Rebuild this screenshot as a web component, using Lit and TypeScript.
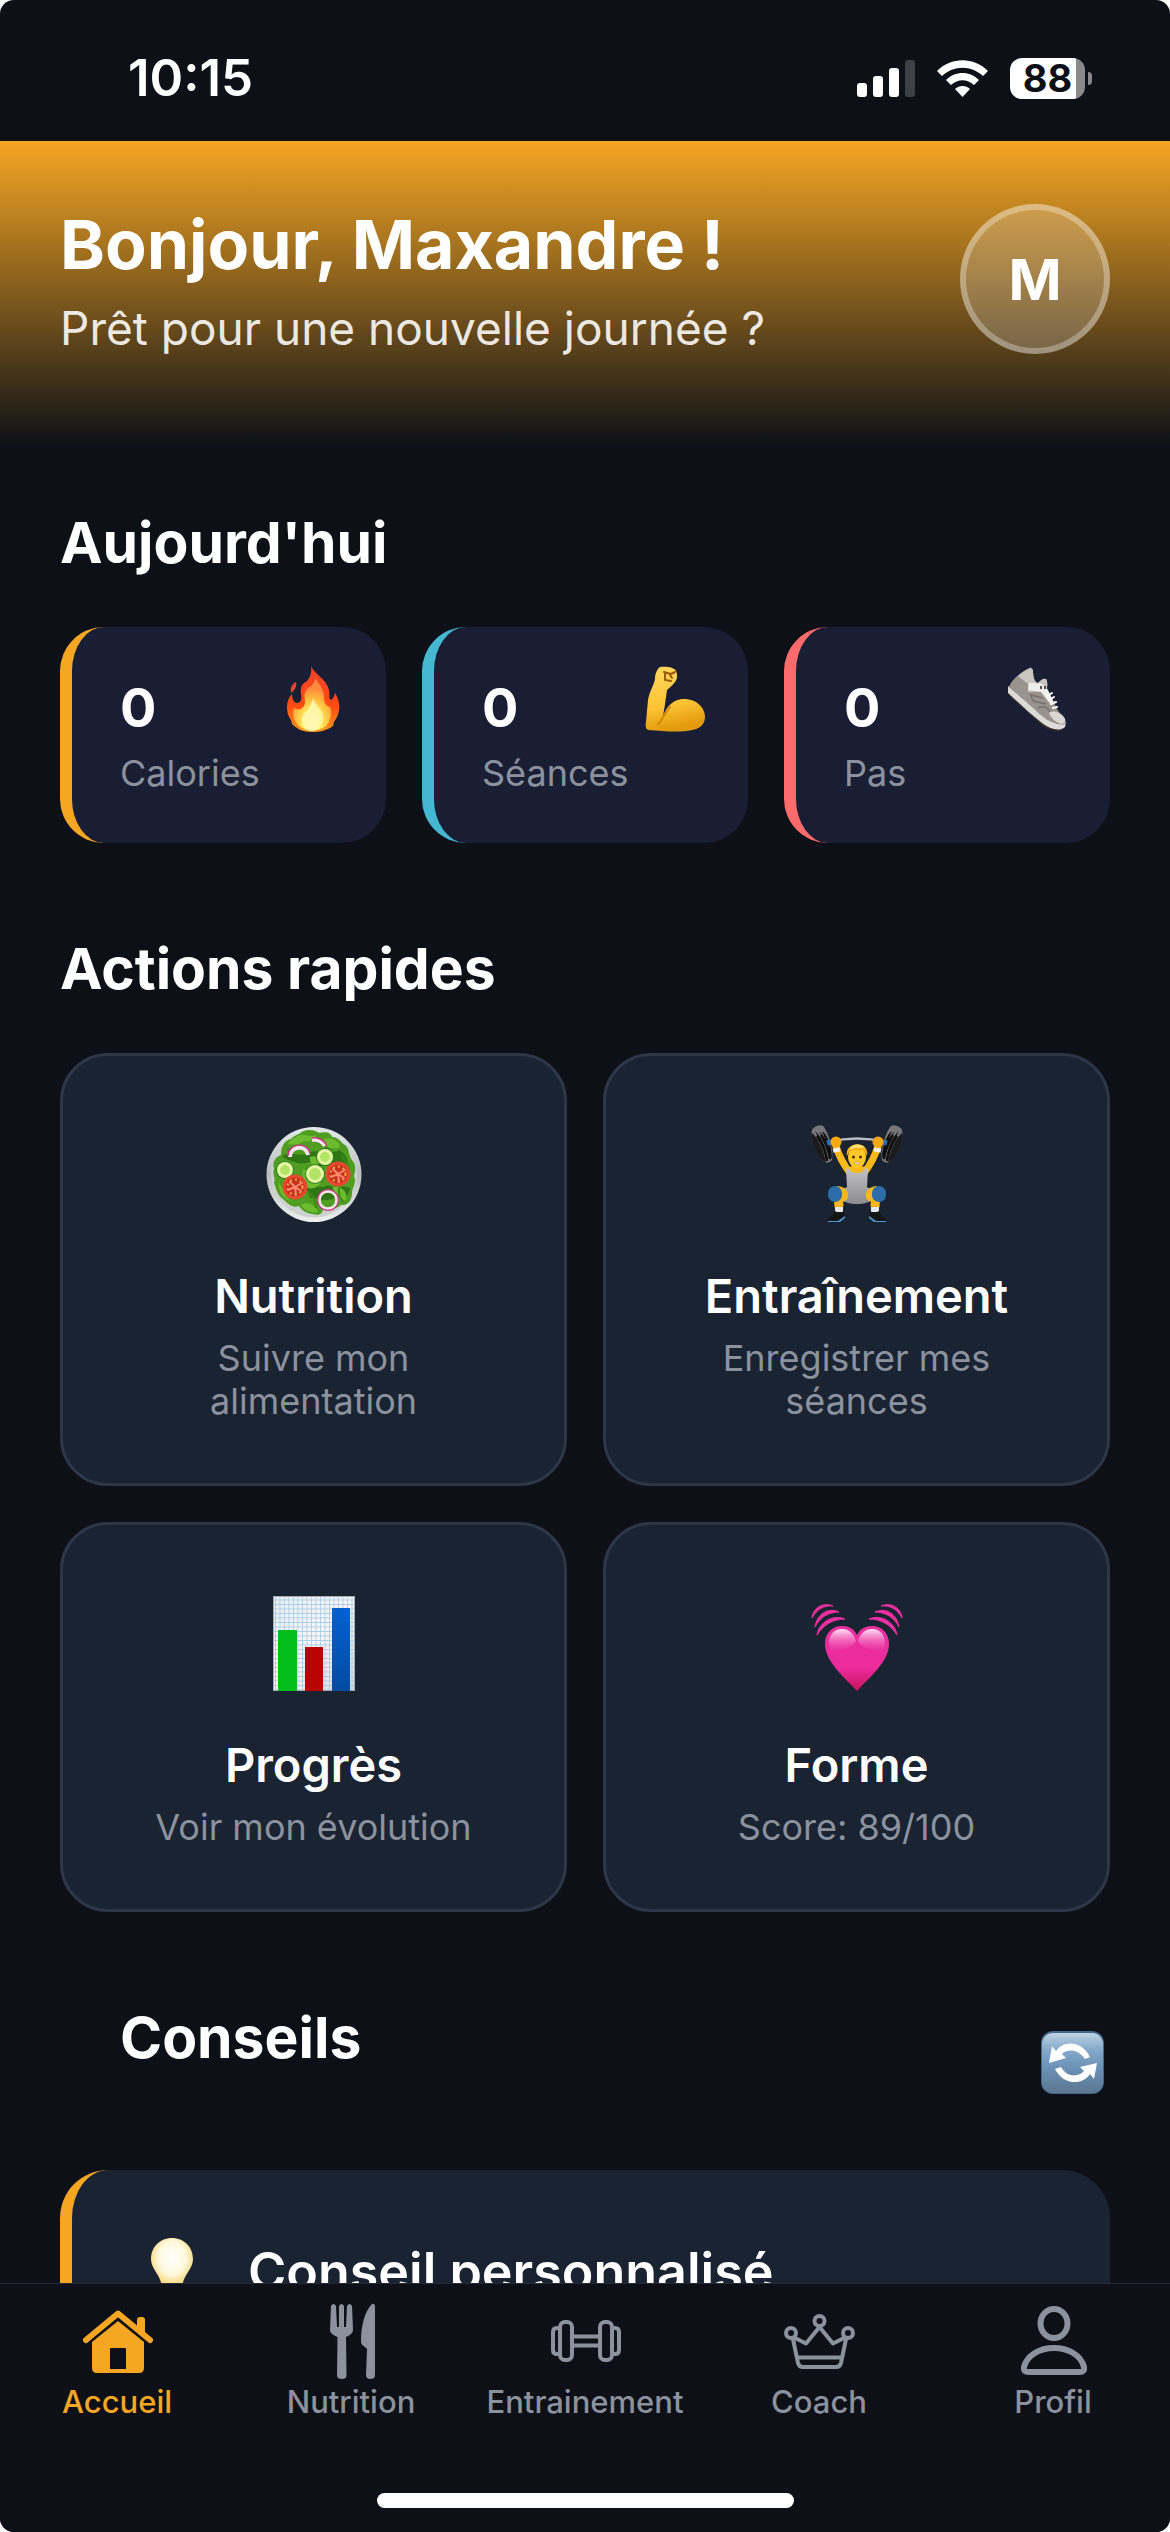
import { LitElement, html, svg, css, type TemplateResult } from "lit";
import { customElement, property, state } from "lit/decorators.js";
import { classMap } from "lit/directives/class-map.js";

type Drawing = TemplateResult<1> | TemplateResult<2>;

const flame = html`
  <svg width="66" height="66" viewBox="0 0 66 66" aria-hidden="true">
    <defs>
      <linearGradient id="flame-outer" x1="0" y1="0" x2="0" y2="1">
        <stop offset="0" stop-color="#f0432b" />
        <stop offset="0.6" stop-color="#ff4a12" />
        <stop offset="1" stop-color="#ff9a1c" />
      </linearGradient>
      <radialGradient id="flame-core" cx="0.5" cy="0.85" r="0.65">
        <stop offset="0" stop-color="#fffbe0" />
        <stop offset="0.35" stop-color="#ffee62" />
        <stop offset="0.75" stop-color="#ffb53c" />
        <stop offset="1" stop-color="#ff8a3c" />
      </radialGradient>
    </defs>
    <path fill="url(#flame-outer)" d="M31 0C34 8 47 13 49 24C50 29 48 32 51 34C54 32 54 30 55 27C59 33 60 40 59 45C58 50 56 53 54 56L53 60C46 65 39 66 32 66C23 66 17 63 12 58L11 54C8 50 7 46 7 41C7 36 9 31 12 28C12 33 14 37 17 37C21 37 22 33 21 28C20 22 22 17 26 16C30 12 32 7 31 0Z" />
    <path fill="#f0432b" d="M16 16C17 20 15 24 11 27C10 22 12 18 16 16Z" />
    <path fill="url(#flame-core)" d="M35 12C39 18 44 23 44 31C44 37 46 40 50 41C53 47 50 56 46 60C38 66 26 66 19 60C14 55 12 49 14 42C18 45 24 43 25 37C25 31 23 28 27 23C32 20 35 17 35 12Z" />
    <path fill="#fff7b0" opacity="0.85" d="M33 32C36 41 44 44 43 53C41 62 36 65 32 65C25 65 21 59 22 52C23 47 31 43 33 32Z" />
  </svg>
`;

const biceps = html`
  <svg width="66" height="66" viewBox="0 0 66 66" aria-hidden="true">
    <defs>
      <linearGradient id="arm-skin" x1="0" y1="0" x2="0.2" y2="1">
        <stop offset="0" stop-color="#ffd860" />
        <stop offset="0.65" stop-color="#fcc433" />
        <stop offset="1" stop-color="#e39a0c" />
      </linearGradient>
    </defs>
    <path fill="url(#arm-skin)" d="M18 1C23 0 33 1 34 5C36 9 35 14 33 16C30 20 27 22 25 24L23 38L21 51C24 40 32 33 42 33C55 33 63 42 63 51C63 59 57 63 50 64C37 67 22 65 6 64C4 63 3 60 4 56L6 34C8 24 12 19 13 13C13 8 15 3 18 1Z" />
    <path fill="none" stroke="#d18b07" stroke-width="2" stroke-linecap="round" d="M21 51C19 55 18 57 16 58M22 50C24 46 25 44 28 41" />
    <path fill="none" stroke="#9a5c06" stroke-width="2" stroke-linecap="round" stroke-linejoin="round" d="M22 6L29 8L33 6M23 7L23 14L29 15M28 9L30 12" />
  </svg>
`;

const sneaker = html`
  <svg width="66" height="66" viewBox="0 0 66 66" aria-hidden="true">
    <path fill="#2c2a2a" d="M4 24L5 30L38 60C44 64 52 67 57 65L60 62L40 52Z" />
    <path fill="#dddbd8" d="M4 20L4 27C14 36 26 48 38 57C46 63 55 66 61 61L62 56L40 50Z" />
    <path fill="#9a928c" d="M26 2C17 6 8 13 5 21C16 30 29 42 38 50C45 56 55 60 61 58C63 54 60 51 56 47C52 43 51 38 48 32C46 28 43 25 43 21L43 14C40 11 37 14 34 17C30 16 29 10 29 4C28 2 27 1 26 2Z" />
    <path fill="#c9c5c1" d="M26 2C21 4 17 7 14 10L24 18L24 26L42 25C44 20 44 16 42 13C39 12 36 15 34 17C30 16 29 10 29 4Z" />
    <path fill="#efedea" d="M25 17C30 17 34 17 38 18L44 24L50 37L47 39L37 26L24 24Z" />
    <path fill="#dad7d3" d="M45 47C49 44 55 46 59 50C62 53 62 57 58 58C53 57 47 53 45 47Z" />
    <path fill="none" stroke="#77706b" stroke-width="1.5" d="M27 29L39 32M29 35L42 38M34 42C40 39 44 42 46 46M26 28L30 36" />
    <path fill="none" stroke="#fff" stroke-width="2" stroke-linecap="round" d="M43 30L48 27M45 34L50 31M47 38L52 36M49 42L53 41" />
    <path fill="#55504c" d="M36 20h2v3h-2zM40 20h2v3h-2z" />
  </svg>
`;

const cucumber = (x: number, y: number, r: number) => svg`
  <circle cx=${x} cy=${y} r=${r} fill="#2f7d1f" />
  <circle cx=${x} cy=${y} r=${r - 1} fill="#e6f6a4" />
  <circle cx=${x} cy=${y} r=${r - 4} fill="#b2e466" />
`;

const tomato = (x: number, y: number) => svg`
  <circle cx=${x} cy=${y} r="12.5" fill="#e8492f" />
  <circle cx=${x} cy=${y} r="9.5" fill="#c5321f" />
  <circle cx=${x} cy=${y} r="7.5" fill="none" stroke="#f4a93f" stroke-width="2" stroke-dasharray="2 3" />
  <path d="M${x} ${y}l-5 -5M${x} ${y}l7 -4M${x} ${y}l1 8M${x} ${y}l-7 3M${x} ${y}l6 4" stroke="#ff8b70" stroke-width="2" stroke-linecap="round" />
`;

const salad = html`
  <svg width="96" height="96" viewBox="0 0 96 96" aria-hidden="true">
    <defs>
      <linearGradient id="plate" x1="0" y1="0" x2="0" y2="1">
        <stop offset="0" stop-color="#e4e8e8" />
        <stop offset="0.5" stop-color="#b9bfbe" />
        <stop offset="1" stop-color="#eef0f0" />
      </linearGradient>
    </defs>
    <circle cx="48" cy="48.5" r="47.5" fill="url(#plate)" />
    <circle cx="48" cy="48.5" r="43" fill="#cdd2d0" />
    <path fill="#4f9e22" d="M33 8C38 3 48 3 53 7C58 6 64 5 66 11C73 11 75 17 79 19C84 23 82 29 86 34C91 40 89 45 88 50C91 57 86 62 86 67C86 74 82 80 75 79C70 84 62 83 57 82C57 86 55 88 52 89C45 88 37 87 33 80C27 83 21 77 17 73C12 70 10 63 8 57C10 52 6 48 8 43C6 36 9 31 15 29C15 20 19 14 25 13C28 10 30 9 33 8Z" />
    <path fill="#2f7615" d="M16 30C24 25 36 31 42 27C52 22 63 30 73 24C82 29 83 37 80 42C66 37 52 43 44 36C34 40 22 35 16 30ZM40 62C48 57 56 64 62 59C69 63 78 59 84 62C83 71 76 74 70 71C62 77 52 72 44 72Z" />
    <path fill="#6dbb2f" d="M30 11C37 6 44 12 50 9C51 14 43 16 38 15C33 19 27 19 22 18C24 14 27 12 30 11ZM57 14C64 10 69 14 73 18C76 21 71 24 66 22C62 22 58 19 57 14ZM36 45C40 40 46 53 55 55C54 62 43 65 39 60ZM67 61C75 60 82 65 80 74C74 77 67 70 67 61ZM35 79C42 74 49 79 52 86C46 87 38 85 35 79ZM13 56C18 64 19 70 24 75C17 72 12 65 13 56ZM44 31C52 28 54 36 52 40C46 40 43 36 44 31Z" />
    <path fill="none" stroke="#3b8a18" stroke-width="2" d="M21 24C28 22 34 22 40 25M46 13C51 17 59 18 67 28M76 29C76 34 83 37 83 44M41 66C47 68 50 75 50 82M73 62C72 68 74 73 78 76" />
    <path fill="none" stroke="#f6e6ee" stroke-width="4" d="M24 31C24 20 40 18 42 29M46 14C52 13 57 16 59 20" />
    <path fill="none" stroke="#c93a83" stroke-width="1.5" d="M22 30C22 17 41 15 44 27M46 12C53 11 59 15 61 20" />
    ${cucumber(59, 31, 9)} ${cucumber(19, 44, 9)} ${cucumber(49, 48, 10)}
    ${tomato(72, 48)} ${tomato(29, 61)}
    <circle cx="62" cy="74" r="10" fill="none" stroke="#c93a83" stroke-width="2" />
    <circle cx="62" cy="74" r="8.5" fill="none" stroke="#f3e7ee" stroke-width="2.5" />
  </svg>
`;

const plates = svg`
  <path fill="#77777a" d="M3 4C4 1 11 -2 14 0C19 5 25 25 23 34C22 36 17 38 15 36C8 30 1 12 3 4Z" />
  <path fill="#1b1b1c" d="M3 7C9 12 15 24 17 37C16 37 15 36 14 35C7 29 2 15 3 7Z" />
  <path fill="#0f0f10" d="M6 5C12 10 18 22 19 36C17 30 11 14 6 5ZM10 5C16 10 21 22 22 35C20 28 15 14 10 5ZM13 5C18 8 23 20 23 33C20 26 17 14 13 5Z" />
  <path fill="none" stroke="#0f0f10" stroke-width="2.5" d="M8 10C13 17 17 27 18 35M12 9C16 16 20 25 21 33" />
`;

const lifter = html`
  <svg width="96" height="96" viewBox="0 0 96 96" aria-hidden="true">
    <defs>
      <linearGradient id="suit" x1="0" y1="0" x2="0" y2="1">
        <stop offset="0" stop-color="#c4c4c6" />
        <stop offset="0.6" stop-color="#a2a2a5" />
        <stop offset="1" stop-color="#8c8c90" />
      </linearGradient>
    </defs>
    <path fill="none" stroke="#b9bcc0" stroke-width="2.5" d="M20 16Q48 9 76 16" />
    <g>${plates}</g>
    <g transform="matrix(-1 0 0 1 96 0)">${plates}</g>
    <path fill="none" stroke="#2b6fb5" stroke-width="5" d="M18 17L22 16M74 16L78 17" />
    <path fill="none" stroke="#fbb917" stroke-width="7" stroke-linecap="round" stroke-linejoin="round" d="M27 20Q31 34 41 47M69 20Q65 34 55 47" />
    <path fill="none" stroke="#f1f1f1" stroke-width="7" d="M27 22L28 26M69 22L68 26" />
    <circle cx="27" cy="16" r="5.5" fill="#f5a90f" />
    <circle cx="69" cy="16" r="5.5" fill="#f5a90f" />
    <path fill="#fbb917" d="M37 42Q48 37 59 42L57 56H39Z" />
    <path fill="none" stroke="#fbb917" stroke-width="9" stroke-linejoin="round" d="M42 69L29 66L30 81M54 69L67 66L66 81" />
    <path fill="url(#suit)" d="M39 41C41 46 45 47 48 47C51 47 55 46 57 41L59 43L58 61C61 63 66 63 68 63C70 72 61 78 48 78C35 78 26 72 28 63C30 63 35 63 38 61L37 43Z" />
    <path fill="#fbb917" d="M28 60C34 60 39 64 39 69C39 74 36 76 32 75L26 72ZM68 60C62 60 57 64 57 69C57 74 60 76 64 75L70 72Z" />
    <rect x="19" y="60" width="14" height="16" rx="7" fill="#2c6ca8" />
    <rect x="63" y="60" width="14" height="16" rx="7" fill="#2c6ca8" />
    <path fill="#e5e7ea" d="M26 81h8v5h-8zM62 81h8v5h-8z" />
    <path fill="#151516" d="M26 85C29 87 32 87 35 85L36 91L30 95H19C18 91 25 90 26 85ZM70 85C67 87 64 87 61 85L60 91L66 95H77C78 91 71 90 70 85Z" />
    <path fill="#4b9ad6" d="M19 95H29L36 90V92L31 96H19ZM77 95H67L60 90V92L65 96H77Z" />
    <ellipse cx="48" cy="31" rx="9" ry="11" fill="#ffc928" />
    <path fill="#f6b21a" d="M38 30C35 15 61 14 58 30C56 26 55 24 53 24C48 26 42 23 40 26Z" />
    <path fill="#ffe373" d="M41 24C42 17 54 17 55 22C50 22 45 21 41 24Z" />
    <circle cx="44.5" cy="31" r="1.5" fill="#4a2d10" />
    <circle cx="51.5" cy="31" r="1.5" fill="#4a2d10" />
    <rect x="45" y="36" width="6" height="2" rx="1" fill="#f4efe6" stroke="#b26a11" stroke-width="0.5" />
  </svg>
`;

const chart = html`
  <svg width="96" height="96" viewBox="0 0 96 96" aria-hidden="true">
    <defs>
      <pattern id="grid-paper" width="4.5" height="4.5" patternUnits="userSpaceOnUse">
        <path d="M0 0H4.5M0 0V4.5" stroke="#a8cdea" stroke-width="1.6" />
      </pattern>
      <linearGradient id="bar-blue" x1="0" y1="0" x2="0" y2="1">
        <stop offset="0" stop-color="#0461d0" />
        <stop offset="1" stop-color="#024ba1" />
      </linearGradient>
      <linearGradient id="paper" x1="0" y1="0" x2="1" y2="1">
        <stop offset="0" stop-color="#e9eef2" />
        <stop offset="0.5" stop-color="#f8f6f3" />
        <stop offset="1" stop-color="#d9d7d6" />
      </linearGradient>
    </defs>
    <rect x="7" y="1" width="82" height="95" fill="url(#paper)" />
    <rect x="7" y="1" width="82" height="95" fill="url(#grid-paper)" />
    <rect x="7.5" y="1.5" width="81" height="94" fill="none" stroke="#a8abb0" />
    <rect x="12" y="35" width="19" height="61" fill="#03be1b" />
    <rect x="39" y="52" width="18" height="44" fill="#b90202" />
    <rect x="66" y="13" width="18" height="83" fill="url(#bar-blue)" />
  </svg>
`;

const beatArcs = svg`
  <path d="M3 23C4 12 15 7 24 11C15 10 8 14 3 23Z" />
  <path d="M6 32C8 19 19 12 30 17C20 17 11 22 6 32Z" />
  <path d="M8 40C10 27 24 19 36 24C24 24 14 30 8 40Z" />
`;

const heart = html`
  <svg width="96" height="96" viewBox="0 0 96 96" aria-hidden="true">
    <defs>
      <linearGradient id="heart-fill" x1="0" y1="0" x2="0" y2="1">
        <stop offset="0" stop-color="#e8309f" />
        <stop offset="0.65" stop-color="#ec2a9b" />
        <stop offset="1" stop-color="#c8145c" />
      </linearGradient>
      <linearGradient id="heart-gloss" x1="0" y1="0" x2="0" y2="1">
        <stop offset="0" stop-color="#ffe3f4" />
        <stop offset="1" stop-color="#f04cb2" stop-opacity="0" />
      </linearGradient>
    </defs>
    <g fill="#ee2fa2" stroke="#ee2fa2" stroke-width="1" stroke-linejoin="round">
      <g>${beatArcs}</g>
      <g transform="matrix(-1 0 0 1 96 0)">${beatArcs}</g>
    </g>
    <path fill="url(#heart-fill)" d="M48 40C45 34 40 31 33 31C23 31 16 38 16 49C16 66 34 81 48 96C62 81 80 66 80 49C80 38 73 31 63 31C56 31 51 34 48 40Z" />
    <path fill="url(#heart-gloss)" d="M47 46C44 37 39 34 33 34C25 34 20 40 20 48C20 52 21 55 24 58C31 54 42 55 47 46ZM49 46C52 37 57 34 63 34C71 34 76 40 76 48C76 52 75 55 72 58C65 54 54 55 49 46Z" />
  </svg>
`;

const refresh = html`
  <svg width="63" height="63" viewBox="0 0 63 63" aria-hidden="true">
    <defs>
      <linearGradient id="tile" x1="0" y1="0" x2="0" y2="1">
        <stop offset="0" stop-color="#bcd2e2" />
        <stop offset="0.28" stop-color="#84a9c9" />
        <stop offset="0.6" stop-color="#6a90b4" />
        <stop offset="1" stop-color="#5c7791" />
      </linearGradient>
    </defs>
    <rect width="63" height="63" rx="12" fill="#44688c" />
    <rect x="1" y="2" width="61" height="60" rx="11" fill="url(#tile)" />
    <g fill="#fff">
      <path d="M8 32L11 15L15 20C22 9 41 9 49 26L44 28C37 17 25 18 21 23L25 27Z" />
      <path d="M56 32L53 48L49 43C41 55 22 54 14 38L20 36C26 47 38 46 43 40L39 36Z" />
    </g>
  </svg>
`;

const bulb = html`
  <svg width="80" height="84" viewBox="0 0 80 84" aria-hidden="true">
    <defs>
      <radialGradient id="glass" cx="0.5" cy="0.4" r="0.6">
        <stop offset="0" stop-color="#ffffff" />
        <stop offset="0.55" stop-color="#fff8dc" />
        <stop offset="1" stop-color="#f3cf62" />
      </radialGradient>
    </defs>
    <path fill="url(#glass)" d="M40 8C28 8 19 17 19 29C19 40 29 44 30 58H50C51 44 61 40 61 29C61 17 52 8 40 8Z" />
    <path fill="#9aa0a6" d="M30 60H50V72C50 76 46 79 40 79C34 79 30 76 30 72Z" />
  </svg>
`;

const tabIcons: Record<string, Drawing> = {
  accueil: svg`
    <path fill="none" stroke="currentColor" stroke-width="6" stroke-linecap="round" stroke-linejoin="round" d="M11 37L43 10.5L75 37" />
    <path fill="currentColor" d="M62 26V17Q62 14 65 14H67Q70 14 70 17V33Z" />
    <path fill="currentColor" fill-rule="evenodd" d="M43 18L69 39V65Q69 70 64 70H22Q17 70 17 65V39ZM36 45Q35 45 35 46V66H51V46Q51 45 50 45Z" />`,
  nutrition: svg`
    <g fill="currentColor">
      <path d="M22 3Q24.5 -1 27 3L28 24H30V3Q32.5 -1 35 3V24H37L38 3Q40.5 -1 43 3L44 27Q44 31 37 34L37.5 73Q37 76 33 76Q28.5 76 28 73L28.5 34Q21 31 21 27Z" />
      <path d="M66 3V72Q66 76 61.5 76Q57 76 57 72L58 46C56 43 52 43 52 38C52 22 56 9 62 2Q65 -1 66 3Z" />
    </g>`,
  entrainement: svg`
    <g fill="none" stroke="currentColor" stroke-width="4">
      <rect x="17" y="19" width="12" height="38" rx="5" />
      <rect x="57" y="19" width="12" height="38" rx="5" />
      <path d="M17 25H14Q10 25 10 29V47Q10 51 14 51H17M69 25H72Q76 25 76 29V47Q76 51 72 51H69M29 33.5H57M29 42.5H57" />
    </g>`,
  coach: svg`
    <g fill="none" stroke="currentColor" stroke-width="4" stroke-linejoin="round">
      <circle cx="42.5" cy="18" r="5" />
      <circle cx="14" cy="30" r="5" />
      <circle cx="71" cy="30" r="5" />
      <path d="M16 36L21 60Q22 64 26 64H59Q63 64 64 60L69 36M18 35L29 40.5L42.5 24L56 40.5L67 35M20 54.5H65" />
    </g>`,
  profil: svg`
    <g fill="none" stroke="currentColor" stroke-width="6">
      <ellipse cx="43" cy="20.5" rx="13.5" ry="14.5" />
      <path d="M17 69H69Q74 69 73 64C70 52 57 45 43 45S16 52 13 64Q12 69 17 69Z" />
    </g>`,
};

@customElement("status-bar")
class StatusBar extends LitElement {
  static styles = css`
    :host {
      display: flex;
      flex: none;
      align-items: flex-start;
      justify-content: space-between;
      height: 141px;
      padding: 48px 78px 0 128px;
      box-sizing: border-box;
      color: #fff;
    }
    .time {
      font-size: 51px;
      font-weight: 600;
      line-height: 60px;
    }
    .status {
      display: flex;
      align-items: center;
      gap: 22px;
      height: 60px;
    }
    .battery {
      display: flex;
      align-items: center;
      gap: 3px;
    }
    .level {
      width: 75px;
      height: 41px;
      border-radius: 12px;
      background: linear-gradient(to right, #fff 88%, #88898d 88%);
      color: #0d1017;
      font-size: 38px;
      font-weight: 700;
      line-height: 41px;
      text-align: center;
    }
    .nub {
      width: 4px;
      height: 13px;
      border-radius: 0 6px 6px 0;
      background: #88898d;
    }
  `;

  render() {
    return html`
      <span class="time">10:15</span>
      <span class="status">
        <svg width="58" height="37" viewBox="0 0 58 37" role="img" aria-label="Réseau">
          <g fill="#fff">
            <rect y="23" width="10" height="14" rx="3" />
            <rect x="16" y="16" width="10" height="21" rx="3" />
            <rect x="32" y="8" width="10" height="29" rx="3" />
            <rect x="48" width="10" height="37" rx="3" fill="#3d4046" />
          </g>
        </svg>
        <svg width="51" height="37" viewBox="0 0 51 37" role="img" aria-label="Wi-Fi">
          <g fill="#fff">
            <path d="M0 11C14 -3.5 37 -3.5 51 11L46 16C34 5 17 5 5 16Z" />
            <path d="M9 20C18 10.5 33 10.5 42 20L37 25C30 18.5 21 18.5 14 25Z" />
            <path d="M18 29C22 25 29 25 33 29L25.5 37Z" />
          </g>
        </svg>
        <span class="battery"><span class="level">88</span><span class="nub"></span></span>
      </span>
    `;
  }
}

@customElement("stat-card")
class StatCard extends LitElement {
  @property() tone = "amber";
  @property() value = "0";
  @property() label = "";
  @property({ attribute: false }) icon?: Drawing;

  static styles = css`
    .card {
      display: flex;
      align-items: flex-start;
      justify-content: space-between;
      padding: 39px 40px 48px 48px;
      border-left: 12px solid #f5a623;
      border-radius: 44px;
      background: #1a1e34;
    }
    .teal {
      border-color: #45b7d1;
    }
    .coral {
      border-color: #ff6b6b;
    }
    .text {
      display: flex;
      flex-direction: column;
      gap: 12px;
      padding-top: 9px;
    }
    .value {
      color: #fff;
      font-size: 54px;
      font-weight: 700;
      line-height: 65px;
    }
    .label {
      color: #8b929e;
      font-size: 36px;
      line-height: 43px;
    }
    svg {
      flex: none;
    }
  `;

  render() {
    return html`
      <div class=${classMap({ card: true, [this.tone]: true })}>
        <div class="text">
          <span class="value">${this.value}</span>
          <span class="label">${this.label}</span>
        </div>
        ${this.icon}
      </div>
    `;
  }
}

@customElement("action-card")
class ActionCard extends LitElement {
  @property() heading = "";
  @property() detail = "";
  @property({ attribute: false }) icon?: Drawing;

  static styles = css`
    :host {
      display: grid;
    }
    .card {
      display: flex;
      flex-direction: column;
      align-items: center;
      padding: 60px;
      border: 3px solid #2d3748;
      border-radius: 48px;
      background: #1a2332;
      color: #fff;
      font: inherit;
      text-align: center;
      cursor: pointer;
    }
    .icon {
      display: grid;
      place-items: center;
      height: 115px;
      margin-bottom: 36px;
    }
    svg {
      overflow: visible;
    }
    .heading {
      margin-bottom: 12px;
      font-size: 47px;
      font-weight: 600;
      line-height: 58px;
    }
    .detail {
      max-width: 330px;
      color: #8b929e;
      font-size: 36px;
      line-height: 43px;
    }
  `;

  render() {
    return html`
      <button class="card" type="button">
        <span class="icon">${this.icon}</span>
        <span class="heading">${this.heading}</span>
        <span class="detail">${this.detail}</span>
      </button>
    `;
  }
}

@customElement("tab-bar")
class TabBar extends LitElement {
  @state() private current = "accueil";

  private tabs = [
    { id: "accueil", label: "Accueil" },
    { id: "nutrition", label: "Nutrition" },
    { id: "entrainement", label: "Entrainement" },
    { id: "coach", label: "Coach" },
    { id: "profil", label: "Profil" },
  ];

  static styles = css`
    :host {
      display: flex;
      flex: none;
      flex-direction: column;
      align-items: center;
      gap: 73px;
      padding: 19px 0 24px;
      border-top: 1px solid #232a33;
      background: #0d1017;
    }
    .tabs {
      display: grid;
      grid-template-columns: repeat(5, 1fr);
      width: 100%;
    }
    .tab {
      display: flex;
      flex-direction: column;
      align-items: center;
      gap: 3px;
      color: #8b929e;
      font-size: 31px;
      font-weight: 500;
      line-height: 36px;
      text-decoration: none;
    }
    .active {
      color: #f5a623;
    }
    .home-indicator {
      width: 36%;
      max-width: 417px;
      height: 15px;
      border-radius: 8px;
      background: #fff;
    }
  `;

  render() {
    return html`
      <nav class="tabs" aria-label="Navigation principale">
        ${this.tabs.map(
          (tab) => html`
            <a
              class=${classMap({ tab: true, active: tab.id === this.current })}
              href="#${tab.id}"
              @click=${() => (this.current = tab.id)}
            >
              <svg width="84" height="78" viewBox="0 0 84 78" aria-hidden="true">${tabIcons[tab.id]}</svg>
              <span>${tab.label}</span>
            </a>
          `
        )}
      </nav>
      <span class="home-indicator"></span>
    `;
  }
}

@customElement("app-root")
class AppRoot extends LitElement {
  static styles = css`
    :host {
      display: flex;
      flex-direction: column;
      height: 100vh;
      overflow: hidden;
      border-radius: 14px;
      background: #0d1017;
      color: #fff;
      font-family: Inter, "Liberation Sans", sans-serif;
    }
    .content {
      flex: 1;
      min-height: 0;
      overflow-x: hidden;
      overflow-y: auto;
      scrollbar-width: none;
    }
    .hero {
      display: flex;
      align-items: center;
      justify-content: space-between;
      padding: 60px 60px 90px;
      background: linear-gradient(#f5a623, #0d1017);
    }
    .greeting {
      display: flex;
      flex-direction: column;
      gap: 12px;
    }
    h1,
    h2,
    h3,
    p {
      margin: 0;
    }
    h1 {
      font-size: 68px;
      font-weight: 700;
      line-height: 86px;
    }
    .greeting p {
      color: rgba(255, 255, 255, 0.9);
      font-size: 46px;
      line-height: 58px;
    }
    .avatar {
      width: 150px;
      height: 150px;
      padding: 0;
      border: 6px solid rgba(255, 255, 255, 0.3);
      border-radius: 50%;
      background: rgba(255, 255, 255, 0.2);
      color: #fff;
      font: inherit;
      font-size: 57px;
      font-weight: 700;
    }
    .sections {
      display: flex;
      flex-direction: column;
      gap: 90px;
      padding: 60px;
    }
    .section {
      display: flex;
      flex-direction: column;
      gap: 48px;
    }
    h2 {
      font-size: 57px;
      font-weight: 700;
      line-height: 72px;
    }
    .stats {
      display: grid;
      grid-template-columns: repeat(3, 1fr);
      gap: 36px;
    }
    .actions {
      display: grid;
      grid-template-columns: repeat(2, 1fr);
      gap: 36px;
    }
    .advice-header {
      display: flex;
      align-items: center;
      justify-content: space-between;
      padding-left: 60px;
    }
    .advice-header h2 {
      padding-bottom: 48px;
    }
    .refresh {
      display: grid;
      padding: 6px;
      border: 0;
      background: none;
      cursor: pointer;
    }
    .advice {
      padding: 60px;
      border-left: 12px solid #f5a623;
      border-radius: 48px;
      background: #1a2332;
    }
    .advice-title {
      display: flex;
      align-items: center;
      gap: 36px;
    }
    h3 {
      font-size: 52px;
      font-weight: 600;
      line-height: 84px;
    }
  `;

  render() {
    return html`
      <status-bar></status-bar>
      <main class="content">
        <header class="hero">
          <div class="greeting">
            <h1>Bonjour, Maxandre !</h1>
            <p>Prêt pour une nouvelle journée ?</p>
          </div>
          <button class="avatar" type="button">M</button>
        </header>
        <div class="sections">
          <section class="section">
            <h2>Aujourd'hui</h2>
            <div class="stats">
              <stat-card tone="amber" label="Calories" .icon=${flame}></stat-card>
              <stat-card tone="teal" label="Séances" .icon=${biceps}></stat-card>
              <stat-card tone="coral" label="Pas" .icon=${sneaker}></stat-card>
            </div>
          </section>
          <section class="section">
            <h2>Actions rapides</h2>
            <div class="actions">
              <action-card heading="Nutrition" detail="Suivre mon alimentation" .icon=${salad}></action-card>
              <action-card heading="Entraînement" detail="Enregistrer mes séances" .icon=${lifter}></action-card>
              <action-card heading="Progrès" detail="Voir mon évolution" .icon=${chart}></action-card>
              <action-card heading="Forme" detail="Score: 89/100" .icon=${heart}></action-card>
            </div>
          </section>
          <section class="section">
            <div class="advice-header">
              <h2>Conseils</h2>
              <button class="refresh" type="button" aria-label="Actualiser les conseils">${refresh}</button>
            </div>
            <article class="advice">
              <div class="advice-title">
                ${bulb}
                <h3>Conseil personnalisé</h3>
              </div>
            </article>
          </section>
        </div>
      </main>
      <tab-bar></tab-bar>
    `;
  }
}
